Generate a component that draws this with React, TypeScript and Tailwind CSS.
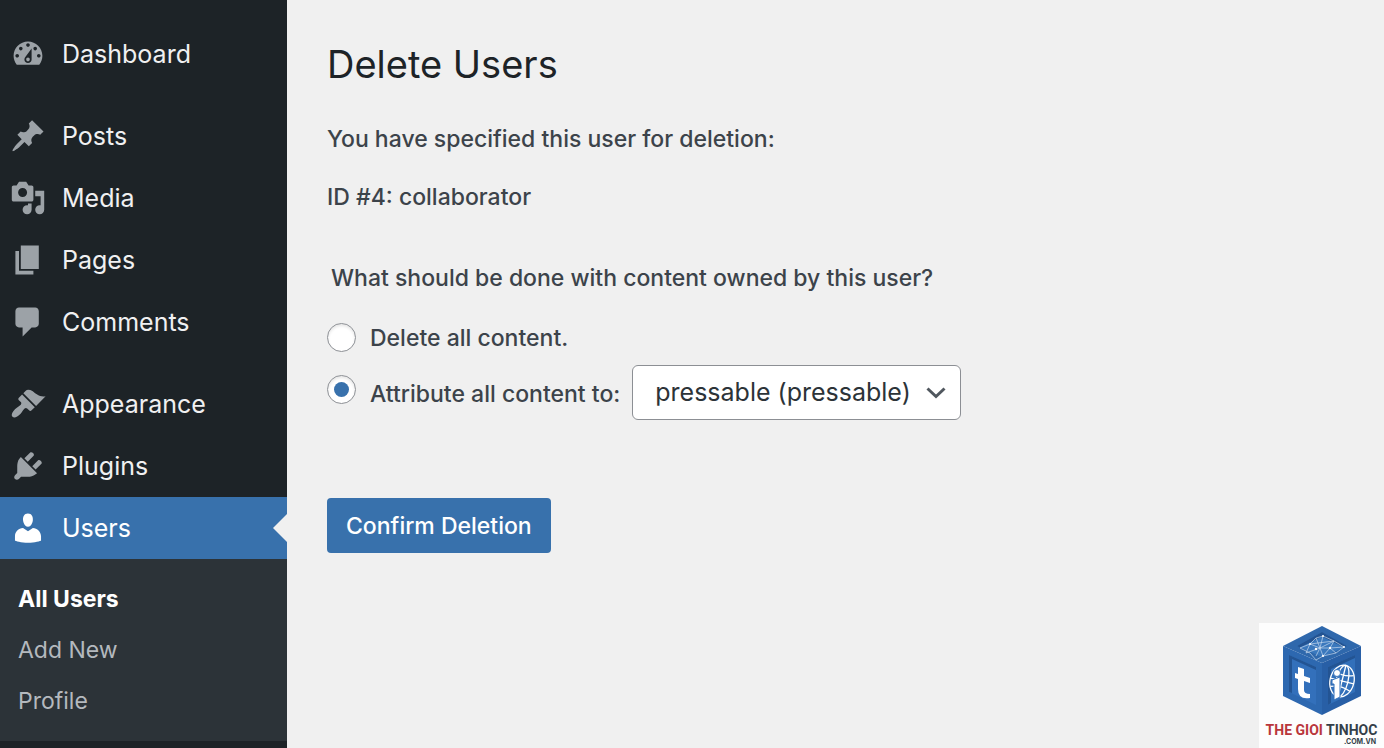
import React, { useState } from 'react';
import clsx from 'clsx';

interface MenuItem {
  label: string;
  icon: string;
  active?: boolean;
}

const menuGroups: MenuItem[][] = [
  [
    {
      label: 'Dashboard',
      icon: 'M3.76 16h12.48c1.1-1.37 1.76-3.11 1.76-5 0-4.42-3.58-8-8-8s-8 3.58-8 8c0 1.89.66 3.63 1.76 5zM10 4c.55 0 1 .45 1 1s-.45 1-1 1-1-.45-1-1 .45-1 1-1zM6 6c.55 0 1 .45 1 1s-.45 1-1 1-1-.45-1-1 .45-1 1-1zm8 0c.55 0 1 .45 1 1s-.45 1-1 1-1-.45-1-1 .45-1 1-1zm-5.37 5.55L12 7v6c0 1.1-.9 2-2 2s-2-.9-2-2c0-.57.24-1.08.63-1.45zM4 10c.55 0 1 .45 1 1s-.45 1-1 1-1-.45-1-1 .45-1 1-1zm12 0c.55 0 1 .45 1 1s-.45 1-1 1-1-.45-1-1 .45-1 1-1zm-5 3c0-.55-.45-1-1-1s-1 .45-1 1 .45 1 1 1 1-.45 1-1z',
    },
  ],
  [
    {
      label: 'Posts',
      icon: 'M10.44 3.02l1.82-1.82 6.36 6.35-1.83 1.82c-1.05-.68-2.48-.57-3.41.36l-.75.75c-.92.93-1.04 2.35-.35 3.41l-1.83 1.82-2.41-2.41-2.8 2.79c-.42.42-3.38 2.71-3.8 2.29s1.86-3.39 2.28-3.81l2.79-2.79L4.1 9.36l1.83-1.82c1.05.69 2.48.57 3.4-.36l.75-.75c.93-.92 1.05-2.35.36-3.41z',
    },
    {
      label: 'Media',
      icon: 'M13 11V4c0-.55-.45-1-1-1h-1.67L9 1H5L3.67 3H2c-.55 0-1 .45-1 1v7c0 .55.45 1 1 1h10c.55 0 1-.45 1-1zM7 4.5c1.38 0 2.5 1.12 2.5 2.5S8.38 9.5 7 9.5 4.5 8.38 4.5 7 5.62 4.5 7 4.5zM14 6h5v10.5c0 1.38-1.12 2.5-2.5 2.5S14 17.88 14 16.5s1.12-2.5 2.5-2.5c.17 0 .34.02.5.05V9h-3V6zm-4 8.05V13h2v3.5c0 1.38-1.12 2.5-2.5 2.5S7 17.88 7 16.5 8.12 14 9.5 14c.17 0 .34.02.5.05z',
    },
    { label: 'Pages', icon: 'M6 15V2h10v13H6zm-1 1h8v2H3V5h2v11z' },
    {
      label: 'Comments',
      icon: 'M5 2h9c1.1 0 2 .9 2 2v7c0 1.1-.9 2-2 2h-2l-5 5v-5H5c-1.1 0-2-.9-2-2V4c0-1.1.9-2 2-2z',
    },
  ],
  [
    {
      label: 'Appearance',
      icon: 'M14.48 11.06L7.41 3.99l1.5-1.5c.5-.56 2.3-.47 3.51.32 1.21.8 1.43 1.28 2.91 2.1 1.18.64 2.45 1.26 4.45.85zm-.71.71L6.7 4.7 4.93 6.47c-.39.39-.39 1.02 0 1.41l1.06 1.06c.39.39.39 1.03 0 1.42-.6.6-1.43 1.11-2.21 1.69-.35.26-.7.53-1.01.84C1.43 14.23.4 16.08 1.4 17.07c.99 1 2.84-.03 4.18-1.36.31-.31.58-.66.85-1.02.57-.78 1.08-1.61 1.69-2.21.39-.39 1.02-.39 1.41 0l1.06 1.06c.39.39 1.02.39 1.41 0z',
    },
    {
      label: 'Plugins',
      icon: 'M13.11 4.36L9.87 7.6 8 5.73l3.24-3.24c.35-.34 1.05-.2 1.56.32.52.51.66 1.21.31 1.55zm-8 1.77l.91-1.12 9.01 9.01-1.19.84c-.71.71-2.63 1.16-3.82 1.16H6.14L4.9 17.26c-.59.59-1.54.59-2.12 0-.59-.58-.59-1.53 0-2.12l1.24-1.24v-3.88c0-1.13.4-3.19 1.09-3.89zm7.26 3.97l3.24-3.24c.34-.35 1.04-.21 1.55.31.52.51.66 1.21.31 1.55l-3.24 3.25z',
    },
    {
      label: 'Users',
      icon: 'M10 9.25c-2.27 0-2.73-3.44-2.73-3.44C7 4.02 7.82 2 9.97 2c2.16 0 2.98 2.02 2.71 3.81 0 0-.41 3.44-2.68 3.44zm0 2.57L12.72 10c2.39 0 4.52 2.33 4.52 4.53v2.49s-3.65 1.13-7.24 1.13c-3.65 0-7.24-1.13-7.24-1.13v-2.49c0-2.25 1.94-4.48 4.47-4.48z',
      active: true,
    },
  ],
];

const submenu = ['All Users', 'Add New', 'Profile'];

const Sidebar: React.FC = () => (
  <nav className="w-[287px] shrink-0 bg-[#1d2327] pt-[23px]">
    <div className="flex flex-col gap-5">
      {menuGroups.map((group) => (
        <ul key={group[0].label}>
          {group.map((item) => (
            <li key={item.label}>
              <a
                href="#"
                className={clsx(
                  'relative flex h-[62px] items-center gap-4 pl-[10px] text-[25px]',
                  item.active ? 'bg-[#3871ac] text-white' : 'text-[#f0f0f1]'
                )}
              >
                <svg
                  viewBox="0 0 20 20"
                  className={clsx('size-9', item.active ? 'fill-white' : 'fill-[#9ca2a7]')}
                >
                  <path d={item.icon} />
                </svg>
                <span className="pt-0.5">{item.label}</span>
                {item.active && (
                  <svg viewBox="0 0 14 28" className="absolute right-0 h-7 w-3.5 fill-[#f0f0f0]">
                    <path d="M14 0v28L0 14z" />
                  </svg>
                )}
              </a>
            </li>
          ))}
        </ul>
      ))}
    </div>
    <ul className="bg-[#2c3338] pt-[15px] pb-[14px] text-[23px] text-[#b4b9be]">
      {submenu.map((label, i) => (
        <li key={label}>
          <a
            href="#"
            className={clsx('flex h-[51px] items-center pl-[18px]', i === 0 && 'font-bold text-white')}
          >
            {label}
          </a>
        </li>
      ))}
    </ul>
  </nav>
);

const radioClass =
  "grid size-[29px] shrink-0 appearance-none place-items-center rounded-full border border-[#8c8f94] bg-white shadow-[inset_0_2px_3px_rgba(0,0,0,0.1)] before:size-[15px] before:rounded-full checked:before:bg-[#3871ac] checked:before:content-['']";

const DeleteForm: React.FC = () => {
  const [action, setAction] = useState('reassign');

  return (
    <form className="text-[23px] leading-[34px] font-medium" onSubmit={(e) => e.preventDefault()}>
      <p className="mt-[34px]">You have specified this user for deletion:</p>
      <p className="mt-6">ID #4: collaborator</p>
      <fieldset className="mt-[47px]">
        <legend className="pl-1">What should be done with content owned by this user?</legend>
        <div className="mt-6 flex items-center gap-[14px]">
          <input
            type="radio"
            id="delete"
            name="action"
            className={radioClass}
            checked={action === 'delete'}
            onChange={() => setAction('delete')}
          />
          <label htmlFor="delete" className="pt-0.5">
            Delete all content.
          </label>
        </div>
        <div className="mt-[10px] flex flex-wrap items-center">
          <input
            type="radio"
            id="reassign"
            name="action"
            className={clsx(radioClass, 'mr-[14px] mb-1.5')}
            checked={action === 'reassign'}
            onChange={() => setAction('reassign')}
          />
          <label htmlFor="reassign" className="pt-0.5">
            Attribute all content to:
          </label>
          <div className="relative ml-3">
            <select
              aria-label="Attribute all content to"
              className="h-[55px] w-[329px] appearance-none rounded-md border border-[#8c8f94] bg-white pb-0.5 pl-[22px] text-[25px] font-normal text-[#2c3338]"
            >
              <option>pressable (pressable)</option>
            </select>
            <svg
              viewBox="0 0 20 12"
              className="pointer-events-none absolute top-[22px] right-[15px] h-3 w-5 fill-none stroke-[#50575e] stroke-3"
            >
              <path d="M1.5 1.5l8.5 8 8.5-8" />
            </svg>
          </div>
        </div>
      </fieldset>
      <button type="submit" className="mt-[78px] h-[55px] rounded bg-[#3871ac] px-[19px] text-white">
        Confirm Deletion
      </button>
    </form>
  );
};

const Logo: React.FC = () => (
  <div className="absolute right-0 bottom-0 flex h-[125px] w-[125px] flex-col items-center bg-[#fdfdfd] pt-[3px]">
    <svg viewBox="0 0 80 90" className="h-[90px] w-20">
      <path d="M40 0l39 20-39 17L1 20z" fill="#2f68ac" />
      <path d="M1 20l39 17v52L1 70z" fill="#2d68b0" />
      <path d="M79 20L40 37v52l39-19z" fill="#285fa6" />
      <path d="M40 6l25 14-25 11-25-11z" fill="#3a78bd" />
      <path d="M40 6l25 14-3 1.500-22-11-22 11L15 20z" fill="#235493" />
      <path d="M7 29l27 12v38L7 66z" fill="#3370bb" />
      <path d="M7 29l27 12v3L10 33v34l-3-1z" fill="#235493" />
      <path d="M73 29L46 41v38l27-13z" fill="#3270ba" />
      <path d="M46 41l27-12v3L49 43v34l-3 2z" fill="#235493" />
      <g fill="none" stroke="#dbe7f5" strokeWidth=".6">
        <path d="M18 22l10-4 6-6 7-2 11 5 10 6-14 1-7 8-7 4-6-7-10-5zM24 27l4-9 10 4 10 0M34 12l4 10-4 8M41 10l-3 12 3 8M52 15l-14 7M28 18l24-3-4 7 6 5-13 3M24 27l14-5M54 27l8-6" />
      </g>
      <g fill="#fff">
        <circle cx="34" cy="23" r="1.2" />
        <circle cx="48" cy="22" r="1.2" />
        <circle cx="41" cy="10" r="1" />
        <circle cx="28" cy="18" r="1" />
        <circle cx="41" cy="30" r="1.1" />
        <circle cx="62" cy="21" r="1" />
      </g>
      <path d="M16 41l6 2v7l6 2v5l-6-2v9q0 4 6 4v4q-12 2-12-9V53l-3-1v-5l3 1z" fill="#fff" />
      <g fill="none" stroke="#fff" strokeWidth="1.300" transform="rotate(14 60 55)">
        <ellipse cx="60" cy="55" rx="12" ry="16" />
        <ellipse cx="60" cy="55" rx="6" ry="16" />
        <path d="M60 39v32M50 47q10 4 20 0M48 55h24M50 63q10-4 20 0" />
      </g>
      <path d="M50 54l8-3v20l-6 3V58h-2z" fill="#fff" stroke="#3270ba" />
      <circle cx="55" cy="47" r="3.500" fill="#fff" stroke="#3270ba" />
    </svg>
    <p className="mt-1.5 font-[Roboto,sans-serif] text-[14px] leading-4 font-bold whitespace-nowrap text-[#343f49]">
      <span className="text-[#b9363c]">THE GIOI</span> TINHOC
    </p>
    <p className="mr-2 self-end text-[7px] leading-2 font-bold text-[#343f49]">.COM.VN</p>
  </div>
);

const App: React.FC = () => (
  <div className="relative flex min-h-screen bg-[#f0f0f0] font-[Inter,sans-serif] text-[#3c434a]">
    <Sidebar />
    <main className="min-w-0 flex-1 px-10 pt-10">
      <h1 className="text-[38px] leading-[48px] text-[#1d2327]">Delete Users</h1>
      <DeleteForm />
    </main>
    <Logo />
  </div>
);

export default App;
